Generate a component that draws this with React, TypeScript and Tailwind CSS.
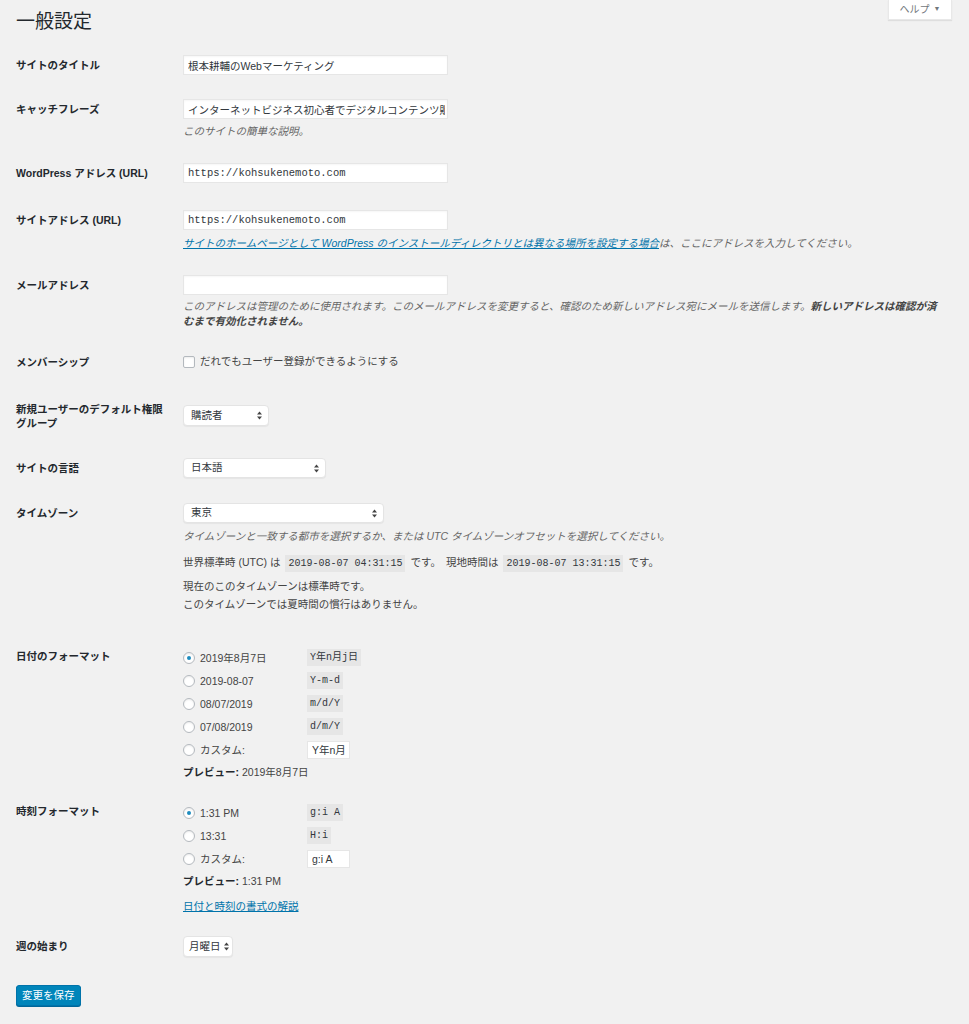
import React from 'react';

const sans = "font-['Liberation_Sans','Noto_Sans_CJK_JP',sans-serif]";
const mono = "font-['Liberation_Mono','Noto_Sans_CJK_JP',monospace]";

const Arrows = () => (
  <svg width="5" height="9" viewBox="0 0 5 9" className="shrink-0">
    <path d="M0 3.6 L2.5 0.4 L5 3.6 Z" fill="#444" />
    <path d="M0 5.4 L2.5 8.6 L5 5.4 Z" fill="#444" />
  </svg>
);

interface SelectProps {
  value: string;
  className: string;
}

const FakeSelect: React.FC<SelectProps> = ({ value, className }) => (
  <div
    className={`${className} flex items-center justify-between gap-[3px] whitespace-nowrap bg-white border border-[#e4e4e4] rounded-[4px] shadow-[0_1px_1px_rgba(0,0,0,0.05)] text-[10.5px] text-[#32373c]`}
  >
    <span>{value}</span>
    <Arrows />
  </div>
);

const TextInput: React.FC<{ value?: string; monoFont?: boolean; className?: string }> = ({
  value = '',
  monoFont,
  className = 'w-[265px] h-[20px]',
}) => (
  <input
    readOnly
    defaultValue={value}
    className={`${className} block bg-white border border-[#e6e6e6] px-[4px] text-[10.5px] text-[#32373c] outline-none shadow-[inset_0_1px_2px_rgba(0,0,0,0.04)] ${
      monoFont ? mono : sans
    }`}
  />
);

const Radio: React.FC<{ checked?: boolean }> = ({ checked }) => (
  <span className="w-[12px] h-[12px] shrink-0 rounded-full bg-white border border-[#b4b9be] flex items-center justify-center shadow-[inset_0_1px_2px_rgba(0,0,0,0.08)]">
    {checked && <span className="w-[4px] h-[4px] rounded-full bg-[#1e8cbe]" />}
  </span>
);

const Code: React.FC<{ children: React.ReactNode }> = ({ children }) => (
  <code className={`${mono} bg-[#e6e6e6] px-[3px] h-[17px] inline-flex items-center text-[10px] text-[#32373c]`}>
    {children}
  </code>
);

interface RowProps {
  label: React.ReactNode;
  className: string;
  children: React.ReactNode;
}

const Row: React.FC<RowProps> = ({ label, className, children }) => (
  <div className={`flex ${className}`}>
    <div className="w-[150px] ml-[16px] mr-[17px] shrink-0 pt-[3px] text-[10.5px] leading-[14px] font-bold text-[#23282d]">
      {label}
    </div>
    <div className="flex-1 min-w-0 text-[10.5px] text-[#444]">{children}</div>
  </div>
);

const FormatOption: React.FC<{ checked?: boolean; label: string; code?: string; custom?: string }> = ({
  checked,
  label,
  code,
  custom,
}) => (
  <div className="h-[23px] flex items-center">
    <div className="w-[124px] flex items-center gap-[5px]">
      <Radio checked={checked} />
      <span className="leading-[14px]">{label}</span>
    </div>
    {code && <Code>{code}</Code>}
    {custom && (
      <input
        readOnly
        defaultValue={custom}
        className={`${sans} w-[43px] h-[18px] bg-white border border-[#e6e6e6] px-[4px] text-[10.5px] text-[#32373c] outline-none`}
      />
    )}
  </div>
);

export default function App() {
  return (
    <div className={`${sans} min-h-screen bg-[#f1f1f1] text-[#444]`}>
      {/* header */}
      <div className="flex justify-between items-start h-[55px]">
        <h1 className="pl-[16px] pt-[10px] text-[19px] leading-[24px] font-normal text-[#23282d]">一般設定</h1>
        <div className="mr-[17px] w-[64px] h-[20px] bg-white shadow-[0_1px_1px_rgba(0,0,0,0.08)] border border-t-0 border-[#e8e8e8] flex items-center justify-center gap-[4px] text-[10px] text-[#72777c]">
          <span>ヘルプ</span>
          <span className="text-[7px]">▼</span>
        </div>
      </div>

      <Row label="サイトのタイトル" className="h-[44px]">
        <TextInput value="根本耕輔のWebマーケティング" />
      </Row>

      <Row label="キャッチフレーズ" className="h-[64px]">
        <TextInput value="インターネットビジネス初心者でデジタルコンテンツ販売を始める方へ" className="w-[265px] h-[20px] !pr-[2px]" />
        <p className="mt-[4px] leading-[16px] italic text-[#666]">このサイトの簡単な説明。</p>
      </Row>

      <Row label="WordPress アドレス (URL)" className="h-[47px]">
        <TextInput value="https://kohsukenemoto.com" monoFont />
      </Row>

      <Row label="サイトアドレス (URL)" className="h-[65px]">
        <TextInput value="https://kohsukenemoto.com" monoFont />
        <p className="mt-[5px] leading-[16px] italic text-[#666] whitespace-nowrap">
          <a href="#" className="text-[#0073aa] underline">
            サイトのホームページとして WordPress のインストールディレクトリとは異なる場所を設定する場合
          </a>
          は、ここにアドレスを入力してください。
        </p>
      </Row>

      <Row label="メールアドレス" className="h-[77px]">
        <TextInput />
        <p className="mt-[4px] leading-[15px] italic text-[#666] pr-[16px]">
          このアドレスは管理のために使用されます。このメールアドレスを変更すると、確認のため新しいアドレス宛にメールを送信します。
          <strong className="text-[#444]">
            新しいアドレスは確認が済
            <br />
            むまで有効化されません。
          </strong>
        </p>
      </Row>

      <Row label="メンバーシップ" className="h-[47px]">
        <div className="h-[20px] flex items-center gap-[5px]">
          <span className="w-[12px] h-[12px] bg-white border border-[#b4b9be] rounded-[2px] shadow-[inset_0_1px_2px_rgba(0,0,0,0.08)]" />
          <span>だれでもユーザー登録ができるようにする</span>
        </div>
      </Row>

      <Row
        label={
          <>
            新規ユーザーのデフォルト権限
            <br />
            グループ
          </>
        }
        className="h-[59px]"
      >
        <div className="pt-[6px]">
          <FakeSelect value="購読者" className="w-[86px] h-[21px] pl-[7px] pr-[6px]" />
        </div>
      </Row>

      <Row label="サイトの言語" className="h-[45px]">
        <FakeSelect value="日本語" className="w-[143px] h-[20px] pl-[7px] pr-[6px]" />
      </Row>

      <Row label="タイムゾーン" className="h-[143px]">
        <FakeSelect value="東京" className="w-[201px] h-[20px] pl-[7px] pr-[6px]" />
        <p className="mt-[5px] leading-[16px] italic text-[#666]">
          タイムゾーンと一致する都市を選択するか、または UTC タイムゾーンオフセットを選択してください。
        </p>
        <p className="mt-[9px] h-[20px] flex items-center gap-[5px]">
          <span>世界標準時 (UTC) は</span>
          <Code>2019-08-07 04:31:15</Code>
          <span>です。</span>
          <span>現地時間は</span>
          <Code>2019-08-07 13:31:15</Code>
          <span>です。</span>
        </p>
        <p className="mt-[4px] leading-[18px]">
          現在のこのタイムゾーンは標準時です。
          <br />
          このタイムゾーンでは夏時間の慣行はありません。
        </p>
      </Row>

      <Row label="日付のフォーマット" className="h-[155px]">
        <FormatOption checked label="2019年8月7日" code="Y年n月j日" />
        <FormatOption label="2019-08-07" code="Y-m-d" />
        <FormatOption label="08/07/2019" code="m/d/Y" />
        <FormatOption label="07/08/2019" code="d/m/Y" />
        <FormatOption label="カスタム:" custom="Y年n月" />
        <div className="h-[23px] flex items-center">
          <strong className="text-[#23282d]">プレビュー:</strong>
          <span className="ml-[3px]">2019年8月7日</span>
        </div>
      </Row>

      <Row label="時刻フォーマット" className="h-[135px]">
        <FormatOption checked label="1:31 PM" code="g:i A" />
        <FormatOption label="13:31" code="H:i" />
        <FormatOption label="カスタム:" custom="g:i A" />
        <div className="h-[23px] flex items-center">
          <strong className="text-[#23282d]">プレビュー:</strong>
          <span className="ml-[3px]">1:31 PM</span>
        </div>
        <div className="mt-[2px] h-[23px] flex items-center">
          <a href="#" className="text-[#0073aa] underline">
            日付と時刻の書式の解説
          </a>
        </div>
      </Row>

      <Row label="週の始まり" className="h-[49px]">
        <FakeSelect value="月曜日" className="w-[50px] h-[21px] pl-[5px] pr-[4px]" />
      </Row>

      <div className="flex pl-[16px] pb-[18px]">
        <button className="h-[21px] px-[5px] bg-[#0085ba] border border-[#0073aa] rounded-[3px] shadow-[0_1px_0_#006799] text-white text-[10.5px] leading-none">
          変更を保存
        </button>
      </div>
    </div>
  );
}
